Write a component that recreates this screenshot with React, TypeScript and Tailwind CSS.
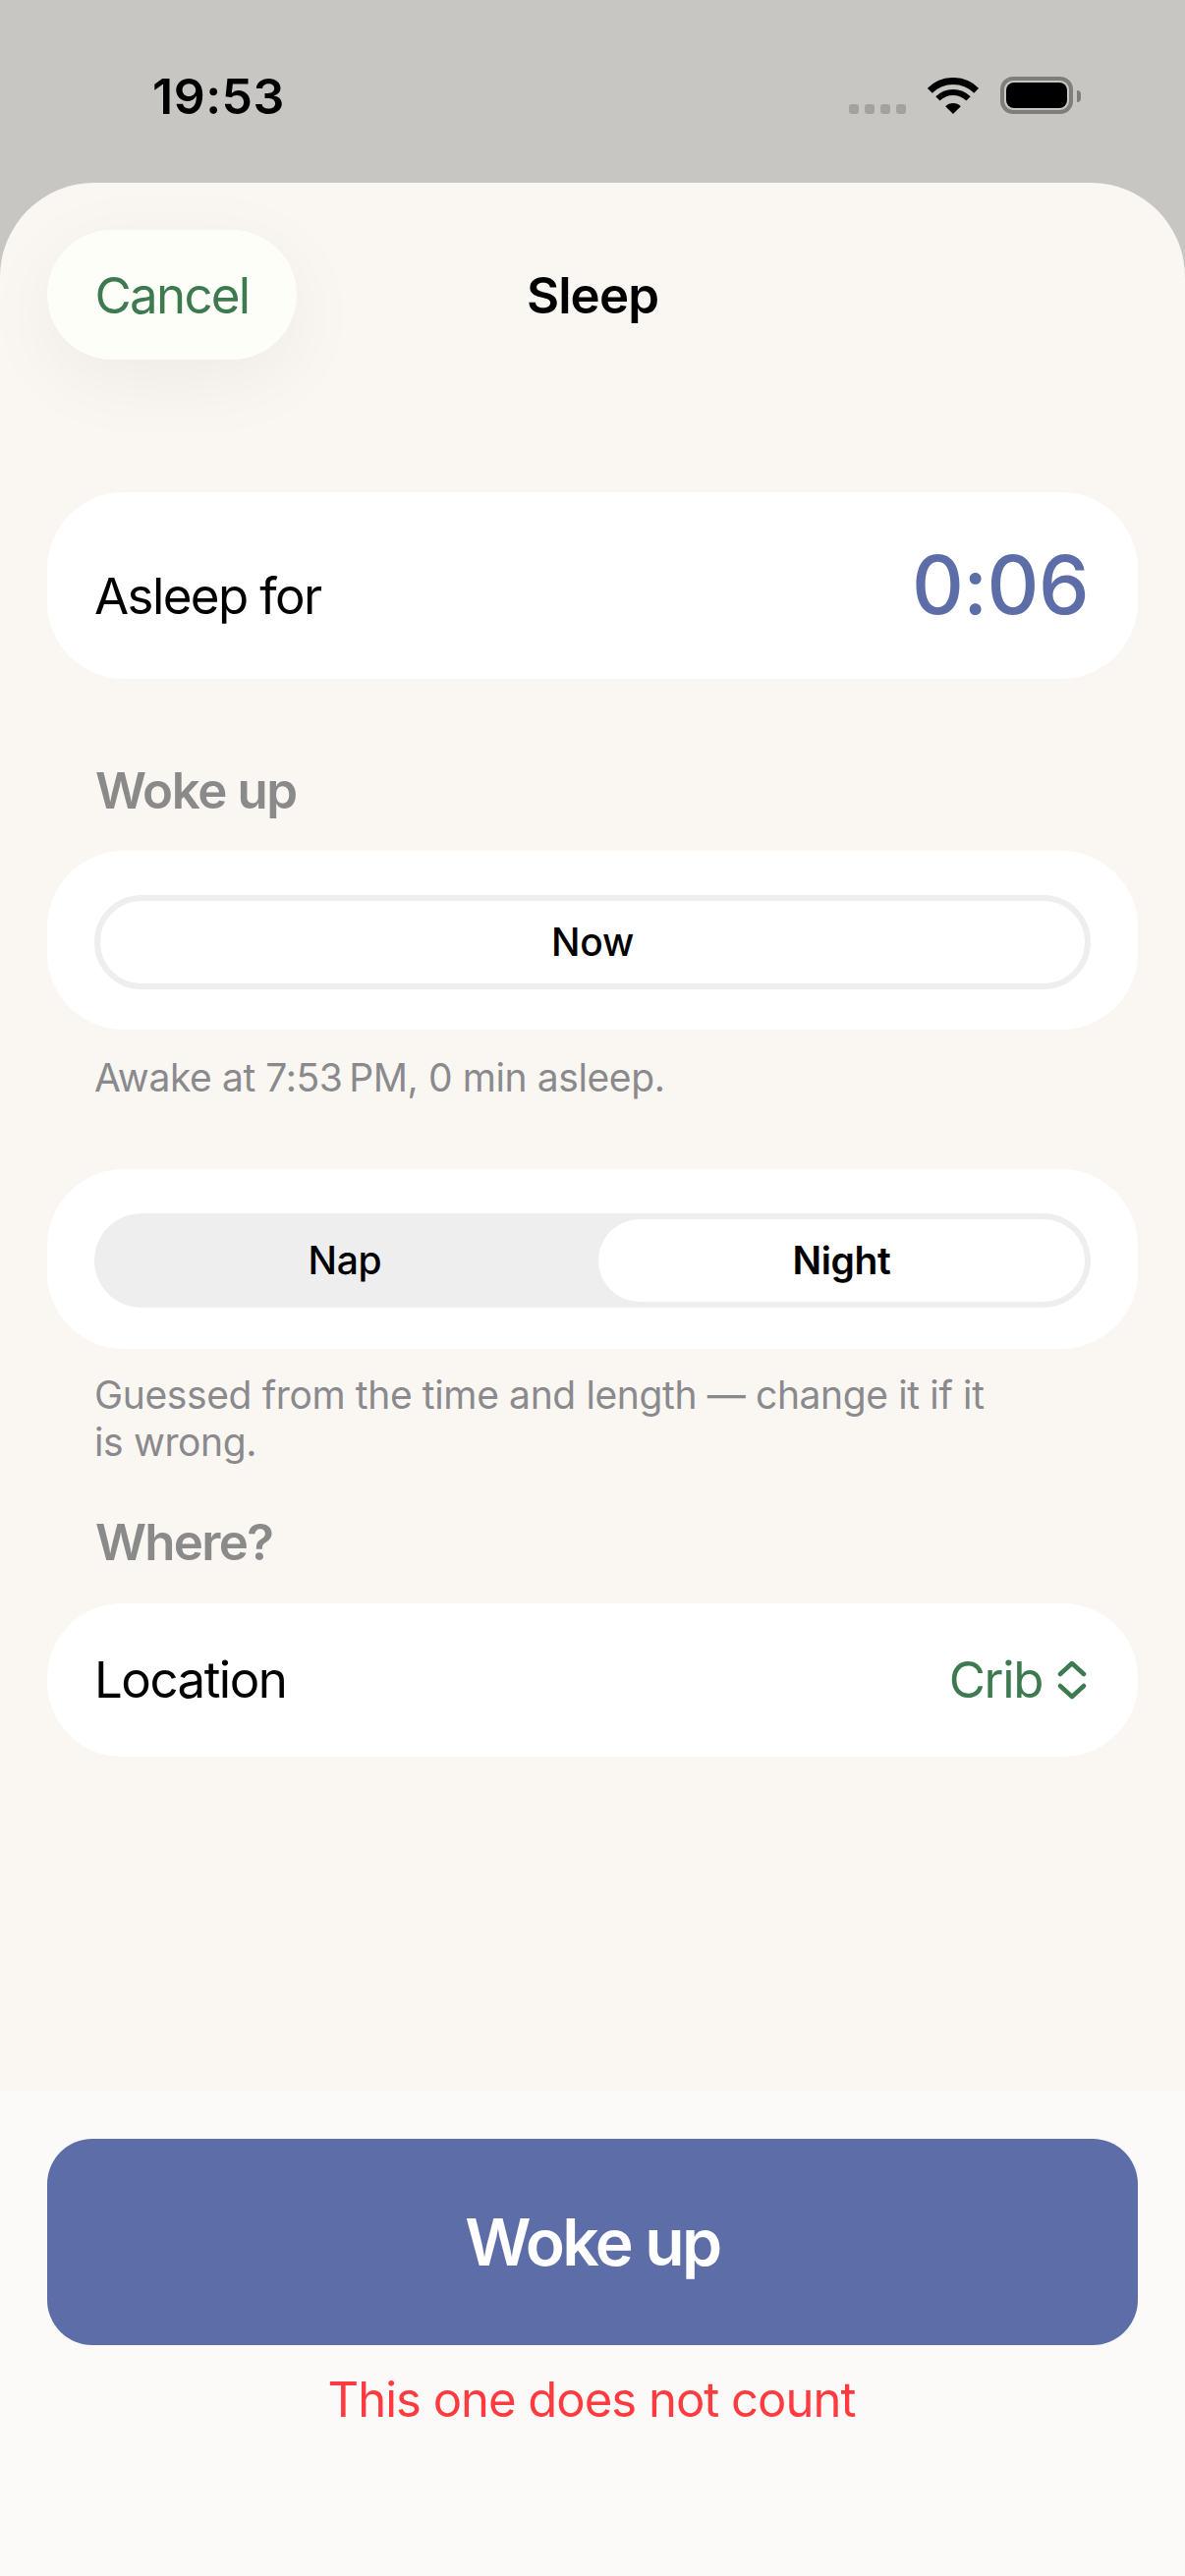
const font = "font-['Inter','Noto_Sans',sans-serif]";

function Wifi() {
  return (
    <svg width="52" height="37" viewBox="0 0 52 37" className="block">
      <path d="M2.3 13.3A33.5 33.5 0 0 1 49.7 13.3" fill="none" stroke="#000" strokeWidth="7" />
      <path d="M10.4 21.4A22 22 0 0 1 41.6 21.4" fill="none" stroke="#000" strokeWidth="6" />
      <path d="M26 37L18.2 29.2A11 11 0 0 1 33.8 29.2Z" fill="#000" />
    </svg>
  );
}

function Chevrons() {
  return (
    <svg width="30" height="40" viewBox="0 0 30 40" className="block" fill="none" stroke="#3d7a50" strokeWidth="4.5" strokeLinecap="round" strokeLinejoin="round">
      <path d="M3 14L15 3L27 14" />
      <path d="M3 26L15 37L27 26" />
    </svg>
  );
}

export default function App() {
  return (
    <div className={`${font} w-[1206px] h-[2622px] flex flex-col bg-[#c7c6c2] overflow-hidden text-black`}>
      <div className="h-[186px] shrink-0 flex justify-between pl-[155px] pr-[106px] pt-[70px]">
        <span className="text-[50px] leading-[56px] font-semibold tracking-[0.5px]">19:53</span>
        <div className="flex items-start pt-[9px]">
          <div className="flex gap-[6px] mt-[27px] mr-[22px]">
            <span className="w-[10px] h-[10px] rounded-[3px] bg-[#a3a29e]" />
            <span className="w-[10px] h-[10px] rounded-[3px] bg-[#a3a29e]" />
            <span className="w-[10px] h-[10px] rounded-[3px] bg-[#a3a29e]" />
            <span className="w-[10px] h-[10px] rounded-[3px] bg-[#a3a29e]" />
          </div>
          <Wifi />
          <div className="ml-[22px] w-[74px] h-[38px] -mt-px rounded-[13px] border-[4px] border-[#7f7e7a] p-[2px]">
            <div className="w-full h-full rounded-[8px] bg-black" />
          </div>
          <div className="ml-[4px] mt-[13px] w-[4px] h-[12px] rounded-r-[4px] bg-[#7f7e7a]" />
        </div>
      </div>

      <div className="flex-1 flex flex-col rounded-t-[96px] bg-[#faf7f2] overflow-hidden">
        <div className="flex-1 flex flex-col px-[48px] pt-[48px]">
          <div className="grid grid-cols-3 items-center">
            <button className="w-[254px] h-[132px] pt-[2px] rounded-[66px] bg-[#fefef9] text-[#3d7a50] text-[51px] tracking-[-1.7px] shadow-[0_20px_80px_rgba(0,0,0,0.05)]">
              Cancel
            </button>
            <div className="pt-[2px] text-center text-[51px] font-semibold tracking-[-0.9px]">Sleep</div>
          </div>

          <div className="mt-[135px] h-[190px] rounded-[78px] bg-white flex items-baseline justify-between pl-[48px] pr-[50px] pt-[50px]">
            <span className="text-[51px] leading-[90px] tracking-[-1.6px]">Asleep for</span>
            <span className="text-[82px] leading-[90px] font-medium tracking-[-0.6px] text-[#5d6da8]">0:06</span>
          </div>

          <div className="mt-[84px] px-[49px] text-[51px] leading-[60px] font-semibold tracking-[-1.4px] text-[#8a8a8a]">Woke up</div>
          <div className="mt-[31px] h-[182px] pt-[3px] rounded-[78px] bg-white flex items-center px-[48px]">
            <div className="w-full h-[96px] pt-[2px] rounded-[48px] border-[6px] border-[#eeeeee] flex items-center justify-center text-[39px] font-medium tracking-[-0.3px]">
              Now
            </div>
          </div>
          <p className="mt-[25px] px-[48px] text-[39px] leading-[48px] tracking-[-0.4px] text-[#8a8a8e]">Awake at 7:53{"\u202f"}PM, 0 min asleep.</p>

          <div className="mt-[69px] h-[183px] pt-[3px] rounded-[78px] bg-white flex items-center px-[48px]">
            <div className="w-full h-[96px] rounded-[48px] bg-[#eeeeee] py-[6px] pr-[6px] grid grid-cols-[1fr_495px] text-[39px] font-medium">
              <div className="flex items-center justify-center pr-[3px] tracking-[-0.3px]">Nap</div>
              <div className="flex items-center justify-center rounded-[42px] bg-white font-semibold tracking-[-0.4px]">Night</div>
            </div>
          </div>
          <p className="mt-[23px] pl-[48px] pr-[48px] max-w-[1023px] text-[39px] leading-[48px] tracking-[-0.37px] text-[#8a8a8e]">
            Guessed from the time and length — change it if it is wrong.
          </p>

          <div className="mt-[48px] px-[49px] text-[51px] leading-[60px] font-semibold tracking-[-1.7px] text-[#8a8a8a]">Where?</div>
          <div className="mt-[32px] h-[156px] rounded-[76px] bg-white flex items-center justify-between pl-[48px] pr-[52px] text-[51px] tracking-[-1.5px]">
            <span>Location</span>
            <span className="flex items-center gap-[15px] text-[#3d7a50] tracking-[-1.4px]">
              Crib
              <Chevrons />
            </span>
          </div>
        </div>

        <div className="h-[494px] shrink-0 bg-[#fbfaf8] px-[48px] pt-[49px] flex flex-col">
          <button className="h-[210px] rounded-[46px] bg-[#5d6da8] text-white text-[66px] font-[560] tracking-[-2.6px]">Woke up</button>
          <div className="mt-[25px] pr-[2px] text-center text-[#ff3b3f] text-[49px] leading-[62px] tracking-[-1px]">This one does not count</div>
        </div>
      </div>
    </div>
  );
}
